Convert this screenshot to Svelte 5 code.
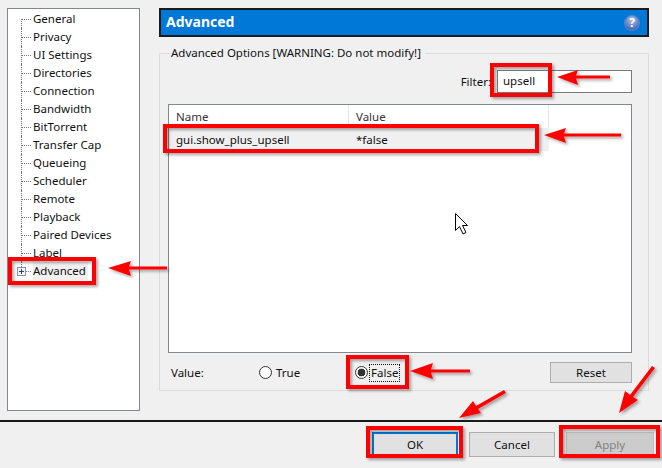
<script lang="ts">
	const pages = [
		'General', 'Privacy', 'UI Settings', 'Directories', 'Connection', 'Bandwidth', 'BitTorrent',
		'Transfer Cap', 'Queueing', 'Scheduler', 'Remote', 'Playback', 'Paired Devices', 'Label', 'Advanced'
	];
	const boxes = [
		[10, 259, 84, 24],
		[492, 65, 58, 30],
		[165, 126, 372, 25],
		[348, 357, 59, 30],
		[368, 428, 93, 28],
		[561, 427, 97, 29]
	];
	const arrows = [
		'M108 268 L131 261 L129 266.5 L167 266.5 L167 269.5 L129 269.5 L131 276 Z',
		'M557 77 L578 70 L576 75.5 L610 75.5 L610 78.5 L576 78.5 L578 85 Z',
		'M544 135 L566 128 L564 133.5 L621 133.5 L621 136.5 L564 136.5 L566 143 Z',
		'M410 371 L433 363 L431 369.5 L470 369.5 L470 372.5 L431 372.5 L433 379 Z',
		'M459 418 L473 401 L476 406 L504 390 L506 393 L478 409 L481 413 Z',
		'M619 413 L625 391 L630 395 L652 366 L655 368 L633 397 L638 400 Z'
	];
</script>

<div class="dialog">
	<div class="main">
		<ul class="tree">
			{#each pages as page, i}
				<li class:last={i === pages.length - 1}>
					{#if i === pages.length - 1}<span class="plus"></span>{/if}
					<span class="label">{page}</span>
				</li>
			{/each}
		</ul>

		<div class="pane">
			<header class="title">
				<span>Advanced</span>
				<svg class="help" width="18" height="18" viewBox="0 0 18 18">
					<defs>
						<radialGradient id="orb" cx="50%" cy="30%" r="70%">
							<stop offset="0" stop-color="#a9c0ea" />
							<stop offset="1" stop-color="#3a62b4" />
						</radialGradient>
					</defs>
					<circle cx="9" cy="9" r="7.6" fill="url(#orb)" stroke="#5b82c4" />
					<text x="9" y="13.2" text-anchor="middle" class="q">?</text>
				</svg>
			</header>

			<fieldset class="group">
				<legend>Advanced Options [WARNING: Do not modify!]</legend>
				<div class="filter">
					<span>Filter:</span>
					<div class="input">upsell</div>
				</div>
				<div class="list">
					<div class="cols">
						<span class="c1">Name</span>
						<span class="c2">Value</span>
					</div>
					<div class="row">
						<span class="c1">gui.show_plus_upsell</span>
						<span class="c2">*false</span>
					</div>
				</div>
				<div class="values">
					<span class="vlabel">Value:</span>
					<span class="radio r-true"><i></i>True</span>
					<span class="radio r-false"><i class="on"></i><b>False</b></span>
					<button class="btn reset">Reset</button>
				</div>
			</fieldset>
		</div>
	</div>

	<footer class="foot">
		<button class="btn ok">OK</button>
		<button class="btn cancel">Cancel</button>
		<button class="btn apply">Apply</button>
	</footer>

	<!-- screenshot annotations drawn over the dialog -->
	<svg class="marks" width="662" height="468" viewBox="0 0 662 468">
		<defs>
			<filter id="shadow" x="-20%" y="-20%" width="140%" height="140%">
				<feDropShadow dx="2" dy="2" stdDeviation="1.5" flood-color="#000" flood-opacity="0.35" />
			</filter>
		</defs>
		<g filter="url(#shadow)">
			{#each boxes as [x, y, w, h]}
				<rect {x} {y} width={w} height={h} fill="none" stroke="#f00" stroke-width="4" />
			{/each}
			{#each arrows as d}
				<path {d} fill="#f00" />
			{/each}
		</g>
		<path
			d="M455.5 213.5 L455.5 230.5 L459.5 226.5 L463 234 L466 232.5 L462.5 225.5 L467.5 225.5 Z"
			fill="#fff"
			stroke="#000"
		/>
	</svg>
</div>

<style>
	:global(body) {
		margin: 0;
		background: #f0f0f0;
	}

	.dialog {
		position: relative;
		width: 662px;
		height: 468px;
		overflow: hidden;
		background: #f0f0f0;
		color: #111;
		font: 11.5px/16px 'Noto Sans', 'Open Sans', sans-serif;
	}

	.main {
		display: flex;
		height: 420px;
		box-sizing: border-box;
		padding: 8px 13px 0 7px;
		gap: 19px;
	}

	.tree {
		width: 133px;
		height: 403px;
		box-sizing: border-box;
		margin: 0;
		padding: 1px 0 0;
		list-style: none;
		background: #fff;
		border: 1px solid #828790;
	}
	.tree li {
		position: relative;
		height: 18px;
		padding-left: 25px;
		line-height: 18px;
	}
	.tree li::before {
		content: '';
		position: absolute;
		left: 13px;
		top: 0;
		height: 100%;
		border-left: 1px dotted #777;
	}
	.tree li::after {
		content: '';
		position: absolute;
		left: 14px;
		width: 9px;
		top: 9px;
		border-top: 1px dotted #777;
	}
	.tree li:first-child::before {
		top: 9px;
		height: 9px;
	}
	.tree li.last::before {
		height: 9px;
	}
	.label {
		display: inline-block;
		padding: 0 2px 0 0;
	}
	.last .label {
		background: #f0f0f0;
	}
	.plus {
		position: absolute;
		z-index: 1;
		left: 9px;
		top: 5px;
		width: 9px;
		height: 9px;
		box-sizing: border-box;
		border: 1px solid #8a94a6;
		background:
			linear-gradient(#23408f, #23408f) center / 5px 1px no-repeat,
			linear-gradient(#23408f, #23408f) center / 1px 5px no-repeat,
			#f4f4f4;
	}

	.pane {
		flex: 1;
		display: flex;
		flex-direction: column;
	}

	.title {
		display: flex;
		align-items: center;
		justify-content: space-between;
		height: 29px;
		box-sizing: border-box;
		padding: 0 6px 2px 5px;
		background: #0078d7;
		border: 2px solid #1b1b1b;
		color: #fff;
		font-weight: 700;
		font-size: 14px;
	}
	.help {
		margin-top: 2px;
	}

	.group {
		margin: 8px 0 0;
		height: 346px;
		box-sizing: border-box;
		padding: 9px 16px 0 8px;
		border: 1px solid #dcdcdc;
		min-width: 0;
	}
	legend {
		margin-left: 3px;
		padding: 0 4px 0 0;
		line-height: 16px;
		white-space: nowrap;
	}

	.filter {
		display: flex;
		justify-content: flex-end;
		align-items: center;
		gap: 6px;
	}
	.input {
		width: 135px;
		height: 23px;
		box-sizing: border-box;
		padding-left: 5px;
		line-height: 19px;
		background: #fff;
		border: 1px solid #7a7a7a;
	}

	.list {
		margin-top: 11px;
		height: 249px;
		box-sizing: border-box;
		background: #fff;
		border: 1px solid #828790;
	}
	.cols,
	.row {
		display: flex;
		height: 23px;
		line-height: 23px;
	}
	.cols {
		color: #333;
	}
	.row {
		width: 380px;
		background: #f0f0f0;
	}
	.c1 {
		width: 180px;
		box-sizing: border-box;
		padding-left: 7px;
	}
	.c2 {
		width: 200px;
		box-sizing: border-box;
		padding-left: 7px;
	}
	.cols .c1,
	.cols .c2 {
		border-right: 1px solid #e5e5e5;
	}

	.values {
		display: flex;
		align-items: center;
		height: 21px;
		margin-top: 9px;
	}
	.vlabel {
		width: 91px;
		padding-left: 3px;
		box-sizing: border-box;
	}
	.radio {
		display: flex;
		align-items: center;
		gap: 4px;
	}
	.r-true {
		width: 96px;
	}
	.radio i {
		width: 13px;
		height: 13px;
		box-sizing: border-box;
		border: 1px solid #333;
		border-radius: 50%;
		background: #fff;
	}
	.radio i.on {
		background: radial-gradient(circle, #333 3.6px, #fff 4.2px);
	}
	.radio b {
		font-weight: 400;
		outline: 1px dotted #111;
		padding: 0 1px;
		margin-left: -2px;
	}

	.btn {
		box-sizing: border-box;
		padding: 0;
		font: inherit;
		color: #111;
		background: #e1e1e1;
		border: 1px solid #adadad;
	}
	.reset {
		width: 82px;
		height: 21px;
		margin-left: auto;
	}

	.foot {
		display: flex;
		justify-content: flex-end;
		gap: 11px;
		height: 48px;
		box-sizing: border-box;
		padding: 10px 8px 0 0;
		border-top: 2px solid #1b1b1b;
	}
	.foot .btn {
		width: 86px;
		height: 25px;
	}
	.foot .apply {
		width: 88px;
	}
	.ok {
		border: 2px solid #0078d7;
	}
	.apply {
		background: #cccccc;
		border-color: #bfbfbf;
		color: #838383;
	}

	.q {
		fill: #fff;
		font-size: 12px;
		font-weight: 700;
	}

	.marks {
		position: absolute;
		left: 0;
		top: 0;
		pointer-events: none;
	}
</style>
